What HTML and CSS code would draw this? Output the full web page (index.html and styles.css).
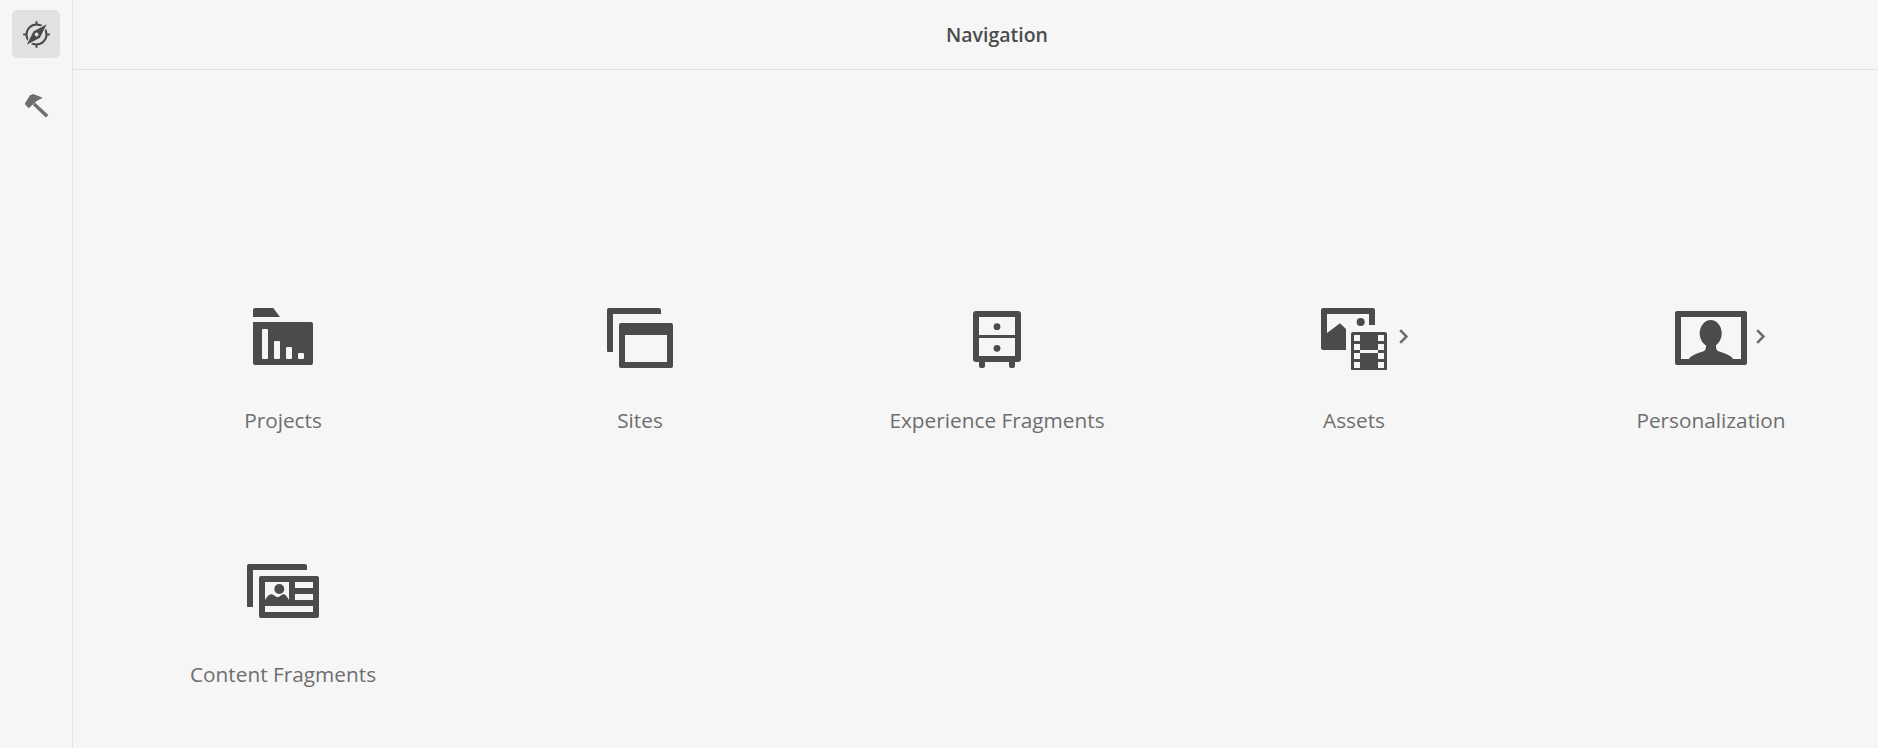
FILE: index.html
```html
<!DOCTYPE html>
<html lang="en">
<head>
<meta charset="utf-8">
<title>Navigation</title>
<link rel="stylesheet" href="styles.css">
</head>
<body>
<div class="shell">
  <nav class="rail">
    <a class="rail-btn is-active" aria-label="Navigation">
      <svg class="rail-icon" viewBox="0 0 28 28"><circle cx="14.500" cy="14.500" r="10" class="ring"/><path class="dark" d="M13.500 1.200h2V5h-2zM13.500 24h2v3.800h-2zM1.200 13.500H5v2H1.200zM24 13.500h3.800v2H24z"/><path class="needle" d="M26 3 18.300 18.300 3.500 26l7.500-15z"/><circle cx="14.600" cy="14.500" r="1.900" class="needle-dot"/></svg>
    </a>
    <a class="rail-btn" aria-label="Tools">
      <svg class="rail-icon" viewBox="0 0 28 28"><path class="mid" d="M2.700 13 6.700 17.300 14.700 10 20.700 6.700 11.300 3 8 4.300z"/><path class="mid" d="m13.200 11.800 13.200 12.100-2.600 2.600L10.800 14z"/></svg>
    </a>
  </nav>
  <main class="main">
    <header class="topbar"><h1 class="title">Navigation</h1></header>
    <div class="grid">
      <a class="tile">
        <span class="tile-icon"><svg class="glyph" viewBox="0 0 72 72"><path class="dark" d="M8 10h18.300L33 19H6v-7a2 2 0 0 1 2-2z"/><path class="dark" fill-rule="evenodd" d="M6 24h58a2 2 0 0 1 2 2v39a2 2 0 0 1-2 2H8a2 2 0 0 1-2-2zM16 31a1 1 0 0 0-1 1v28a1 1 0 0 0 1 1h4a1 1 0 0 0 1-1V32a1 1 0 0 0-1-1zM28 43a1 1 0 0 0-1 1v16a1 1 0 0 0 1 1h4a1 1 0 0 0 1-1V44a1 1 0 0 0-1-1zM40 49a1 1 0 0 0-1 1v10a1 1 0 0 0 1 1h4a1 1 0 0 0 1-1V50a1 1 0 0 0-1-1zM52 55a1 1 0 0 0-1 1v4a1 1 0 0 0 1 1h4a1 1 0 0 0 1-1v-4a1 1 0 0 0-1-1z"/></svg></span>
        <span class="tile-label">Projects</span>
      </a>
      <a class="tile">
        <span class="tile-icon"><svg class="glyph" viewBox="0 0 72 72"><path class="dark" d="M5 10h50a2 2 0 0 1 2 2v4H9v38H4a1 1 0 0 1-1-1V12a2 2 0 0 1 2-2z"/><path class="dark" fill-rule="evenodd" d="M17 25h50a2 2 0 0 1 2 2v41a2 2 0 0 1-2 2H17a2 2 0 0 1-2-2V27a2 2 0 0 1 2-2zM21 37v27h42V37z"/></svg></span>
        <span class="tile-label">Sites</span>
      </a>
      <a class="tile">
        <span class="tile-icon"><svg class="glyph" viewBox="0 0 72 72"><path class="dark" fill-rule="evenodd" d="M15 13h42a3 3 0 0 1 3 3v45a3 3 0 0 1-3 3h-3v4a2 2 0 0 1-2 2h-2a2 2 0 0 1-2-2v-4H24v4a2 2 0 0 1-2 2h-2a2 2 0 0 1-2-2v-4h-3a3 3 0 0 1-3-3V16a3 3 0 0 1 3-3zM18 19v18h36V19zM18 40v18h36V40z"/><circle class="dark" cx="36" cy="28.700" r="3.400"/><circle class="dark" cx="36" cy="50.300" r="3.400"/></svg></span>
        <span class="tile-label">Experience Fragments</span>
      </a>
      <a class="tile">
        <span class="tile-icon"><svg class="glyph" viewBox="0 0 72 72"><path class="dark" d="M5 10h50a2 2 0 0 1 2 2v15h-6V16H9v19l13-9.700 6 5.700v21H5a2 2 0 0 1-2-2V12a2 2 0 0 1 2-2z"/><circle class="dark" cx="42.700" cy="24" r="4"/><path class="dark" fill-rule="evenodd" d="M35 34h32a2 2 0 0 1 2 2v35a2 2 0 0 1-2 2H35a2 2 0 0 1-2-2V36a2 2 0 0 1 2-2zM36 37v6h6v-6zM60 37v6h6v-6zM36 46v6h6v-6zM60 46v6h6v-6zM42 52v3h18v-3zM36 55v6h6v-6zM60 55v6h6v-6zM36 64v6h6v-6zM60 64v6h6v-6z"/></svg><svg class="chevron" viewBox="0 0 9 15"><path d="M1.200 1.200 7.500 7.500 1.200 13.800"/></svg></span>
        <span class="tile-label">Assets</span>
      </a>
      <a class="tile">
        <span class="tile-icon"><svg class="glyph" viewBox="0 0 72 72"><path class="dark" fill-rule="evenodd" d="M2 13h68a2 2 0 0 1 2 2v50a2 2 0 0 1-2 2H2a2 2 0 0 1-2-2V15a2 2 0 0 1 2-2zM6 19v42h60V19z"/><ellipse class="dark" cx="35.700" cy="35.300" rx="11" ry="13.300"/><path class="dark" d="M14 61c2-4 10-6 15-8 2-1 2-3 2-8h10c0 5 0 7 2 8 5 2 13 4 15 8z"/></svg><svg class="chevron" viewBox="0 0 9 15"><path d="M1.200 1.200 7.500 7.500 1.200 13.800"/></svg></span>
        <span class="tile-label">Personalization</span>
      </a>
      <a class="tile">
        <span class="tile-icon"><svg class="glyph" viewBox="0 0 72 72"><g transform="translate(0 2)"><path class="dark" d="M2 10h56a2 2 0 0 1 2 2v4H6v37H1a1 1 0 0 1-1-1V12a2 2 0 0 1 2-2z"/><path class="dark" fill-rule="evenodd" d="M14 22h56a2 2 0 0 1 2 2v38a2 2 0 0 1-2 2H14a2 2 0 0 1-2-2V24a2 2 0 0 1 2-2zM18 28v18c2-3 4-6 6.700-5.700 2 .2 4 3 6 3s3.500-3 5.600-3c2.700 0 3.700 2.700 5.700 5.700V28zM48 28v6h18v-6zM48 40v6h18v-6zM18 52v6h48v-6z"/><circle class="dark" cx="32.300" cy="35" r="5"/></g></svg></span>
        <span class="tile-label">Content Fragments</span>
      </a>
    </div>
  </main>
</div>
</body>
</html>
```
FILE: styles.css
```css
* { box-sizing: border-box; }
html, body { margin: 0; height: 100%; overflow: hidden; background: #f6f6f6; }
body { font-family: "Open Sans", "Noto Sans", "Liberation Sans", sans-serif; }
.shell { display: flex; height: 748px; width: 1921px; overflow: hidden; }
.rail {
  flex: none; width: 73px; padding: 10px 12px;
  display: flex; flex-direction: column; gap: 23px;
  border-right: 1px solid #e3e3e3;
}
.rail-btn { width: 48px; height: 48px; border-radius: 5px; display: flex; align-items: center; justify-content: center; }
.rail-btn.is-active { background: #e1e1e1; }
.rail-icon { width: 28px; height: 28px; display: block; }
.ring { fill: none; stroke: #4b4b4b; stroke-width: 2; }
.needle { fill: #4b4b4b; stroke: #e1e1e1; stroke-width: 1.200; }
.needle-dot { fill: #e1e1e1; }
.dark { fill: #4b4b4b; }
.mid { fill: #6e6e6e; }
.main { flex: none; width: 1848px; }
.topbar { height: 70px; border-bottom: 1px solid #e1e1e1; display: flex; align-items: center; justify-content: center; }
.title { margin: 0; font-size: 19.500px; font-weight: 600; color: #4b4b4b; line-height: 24px; }
.grid {
  display: grid; grid-template-columns: repeat(5, 356px);
  column-gap: 1px; grid-template-rows: 254px 137px;
  padding: 228px 0 0 32px;
}
.tile { display: flex; flex-direction: column; align-items: center; }
.tile-icon { position: relative; width: 72px; height: 72px; display: block; }
.glyph { width: 72px; height: 72px; display: block; }
.chevron { position: absolute; left: 81px; top: 31px; width: 9px; height: 15px; fill: none; stroke: #6e6e6e; stroke-width: 2.600; }
.tile-label { margin-top: 36px; font-size: 20.800px; line-height: 28px; color: #6e6e6e; white-space: nowrap; }
```
